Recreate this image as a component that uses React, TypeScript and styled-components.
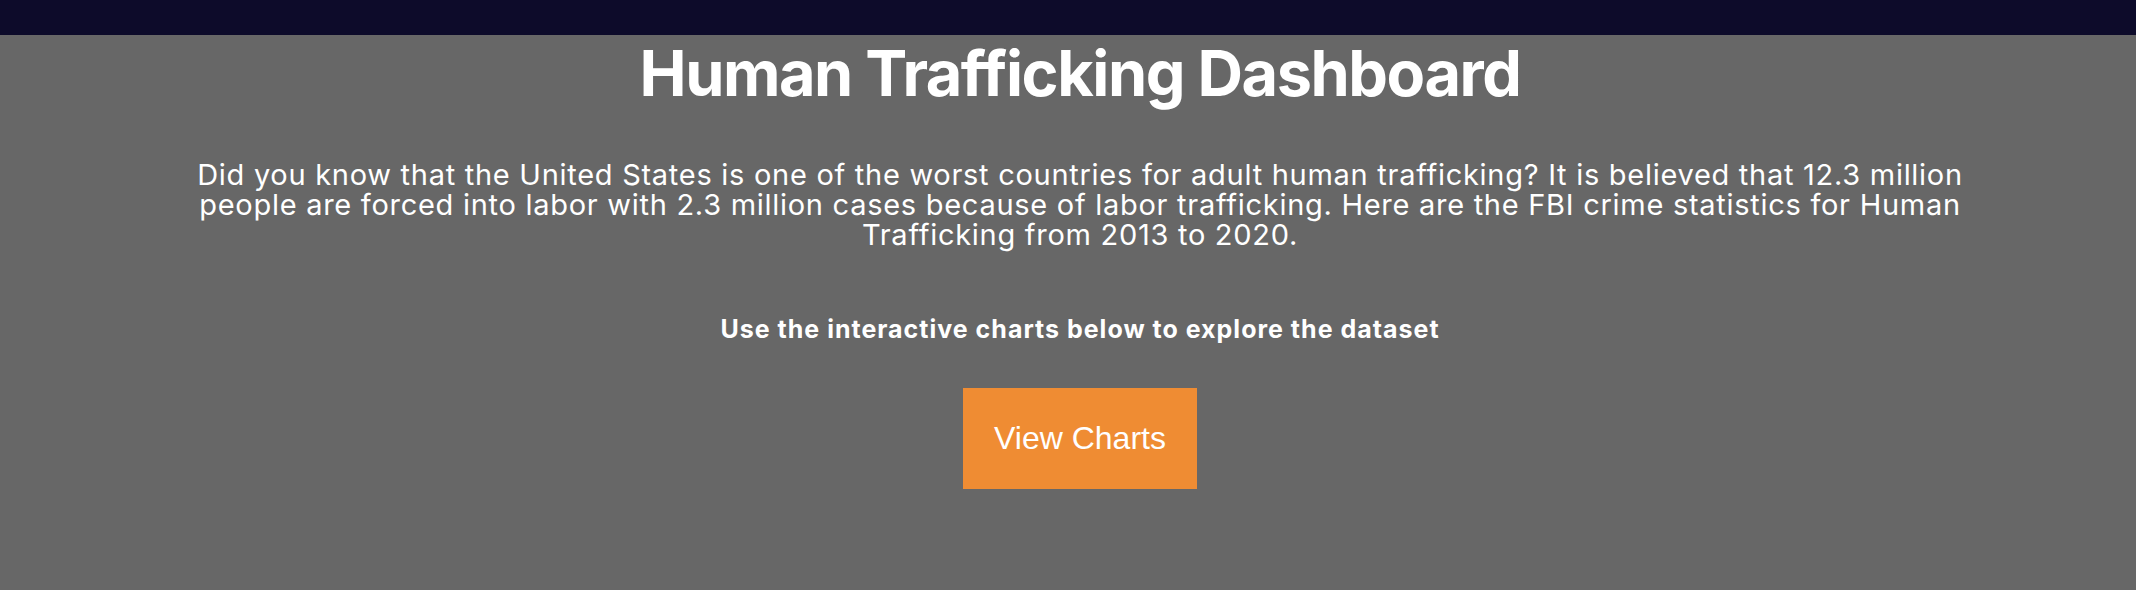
import React from "react";
import styled, { createGlobalStyle } from "styled-components";

const GlobalStyle = createGlobalStyle`
  html, body {
    margin: 0;
    padding: 0;
    background: #676767;
    font-family: Inter, "Liberation Sans", Arial, sans-serif;
    color: #ffffff;
  }
`;

const Page = styled.div`
  min-height: 590px;
  display: flex;
  flex-direction: column;
`;

const TopBar = styled.header`
  height: 35px;
  background: #0d0b2a;
`;

const Hero = styled.main`
  display: flex;
  flex-direction: column;
  align-items: center;
  text-align: center;
  padding-left: 24px;
`;

const Title = styled.h1`
  margin: 0;
  font-size: 63px;
  font-weight: 700;
  line-height: 76px;
  letter-spacing: -1.45px;
`;

const Intro = styled.p`
  margin: 49px 0 0;
  max-width: 1800px;
  font-size: 29px;
  line-height: 30px;
  font-weight: 400;
  letter-spacing: 0.72px;
`;

const Prompt = styled.h3`
  margin: 64px 0 0;
  font-size: 25px;
  line-height: 30px;
  font-weight: 700;
  letter-spacing: 1px;
`;

const ViewButton = styled.button`
  margin-top: 44px;
  padding: 32px 31px;
  border: none;
  border-radius: 0;
  background: #ef8c33;
  color: #ffffff;
  font-family: "Liberation Sans", Arial, sans-serif;
  font-size: 32px;
  line-height: 37px;
  cursor: pointer;
`;

export default function App() {
  return (
    <>
      <GlobalStyle />
      <Page>
        <TopBar />
        <Hero>
          <Title>Human Trafficking Dashboard</Title>
          <Intro>
            Did you know that the United States is one of the worst countries for adult human
            trafficking? It is believed that 12.3 million people are forced into labor with 2.3
            million cases because of labor trafficking. Here are the FBI crime statistics for Human
            Trafficking from 2013 to 2020.
          </Intro>
          <Prompt>Use the interactive charts below to explore the dataset</Prompt>
          <ViewButton>View Charts</ViewButton>
        </Hero>
      </Page>
    </>
  );
}
